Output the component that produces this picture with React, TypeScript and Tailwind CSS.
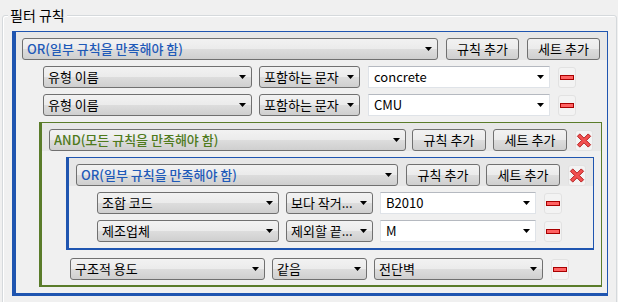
import type { ReactNode } from "react";

const Arrow = () => (
  <svg width="7" height="4" viewBox="0 0 7 4" className="shrink-0">
    <path d="M0 0h7L3.5 4z" fill="#000" />
  </svg>
);

function Combo({ w, children, tone = "text-black" }: { w: string; children: ReactNode; tone?: string }) {
  return (
    <div className={`${w} h-[22px] shrink-0 flex items-center justify-between pl-[4px] pr-[5px] rounded-[3px] border border-[#707070] bg-[linear-gradient(#f2f2f2_0%,#ebebeb_50%,#dddddd_50%,#cfcfcf_100%)] ${tone}`}>
      <span className="truncate whitespace-nowrap">{children}</span>
      <Arrow />
    </div>
  );
}

function Field({ w, children }: { w: string; children: ReactNode }) {
  return (
    <div className={`${w} h-[22px] shrink-0 flex items-center justify-between pl-[5px] pr-[5px] border border-[#dfe3e8] border-t-[#b5b9c0] bg-white`}>
      <span className="whitespace-nowrap">{children}</span>
      <Arrow />
    </div>
  );
}

function Btn({ w, children }: { w: string; children: ReactNode }) {
  return (
    <div className={`${w} h-[22px] shrink-0 flex items-center justify-center rounded-[3px] border border-[#707070] bg-[linear-gradient(#f2f2f2_0%,#ebebeb_50%,#dddddd_50%,#cfcfcf_100%)]`}>
      {children}
    </div>
  );
}

const Minus = () => (
  <div className="w-[18px] h-[21px] shrink-0 flex items-center justify-center rounded-[3px] border border-[#e2e2e2] bg-[#f3f3f3]">
    <div className="w-[14px] h-[5px] border border-[#a80000] bg-[#ff6262]" />
  </div>
);

const Remove = () => (
  <div className="w-[18px] h-[21px] shrink-0 flex items-center justify-center rounded-[3px] border border-[#e2e2e2] bg-[#f3f3f3]">
    <svg width="17" height="17" viewBox="0 0 17 17">
      <path
        d="M1.5 4 L4 1.5 L8.5 6 L13 1.5 L15.5 4 L11 8.5 L15.5 13 L13 15.5 L8.5 11 L4 15.5 L1.5 13 L6 8.5 Z"
        fill="#f25050"
        stroke="#b01818"
        strokeWidth="1"
        strokeLinejoin="round"
      />
    </svg>
  </div>
);

export default function App() {
  return (
    <div className="w-[618px] h-[302px] overflow-hidden bg-[#f0f0f0] text-[13px] text-black font-['Noto_Sans_CJK_KR','Noto_Sans',sans-serif]">
      <div className="relative mt-[15px] ml-[2px] w-[615px] h-[300px] rounded-[3px] border border-[#d5d9dc] shadow-[inset_1px_1px_0_#ffffff]">
        <div className="absolute -top-[10px] left-[5px] px-[2px] bg-[#f0f0f0] text-[14px] leading-[18px]">필터 규칙</div>

        {/* OR outer */}
        <div className="mt-[15px] ml-[9px] w-[596px] border-l-4 border-t border-r border-b-[3px] border-[#1f55b0] pb-[6px]">
          <div className="h-[28px] pt-[6px] pl-[6px] flex gap-[8px] bg-[#e7e7e7]">
            <Combo w="w-[416px]" tone="text-[#1f5ab8] font-medium">OR(일부 규칙을 만족해야 함)</Combo>
            <Btn w="w-[73px]">규칙 추가</Btn>
            <Btn w="w-[73px]">세트 추가</Btn>
          </div>

          <div className="mt-[6px] pl-[27px] flex flex-col gap-[6px]">
            <div className="flex items-center">
              <Combo w="w-[209px]">유형 이름</Combo>
              <div className="ml-[7px]"><Combo w="w-[101px]">포함하는 문자</Combo></div>
              <div className="ml-[8px]"><Field w="w-[182px]">concrete</Field></div>
              <div className="ml-[8px]"><Minus /></div>
            </div>
            <div className="flex items-center">
              <Combo w="w-[209px]">유형 이름</Combo>
              <div className="ml-[7px]"><Combo w="w-[101px]">포함하는 문자</Combo></div>
              <div className="ml-[8px]"><Field w="w-[182px]">CMU</Field></div>
              <div className="ml-[8px]"><Minus /></div>
            </div>
          </div>

          {/* AND group */}
          <div className="mt-[6px] ml-[23px] w-[563px] border-l-[3px] border-t border-r border-b-2 border-[#5a7c2a] pb-[5px]">
            <div className="h-[28px] pt-[6px] pl-[7px] flex items-center bg-[#e7e7e7]">
              <div className="self-end"><Combo w="w-[357px]" tone="text-[#4f7a1c] font-medium">AND(모든 규칙을 만족해야 함)</Combo></div>
              <div className="self-end ml-[6px]"><Btn w="w-[74px]">규칙 추가</Btn></div>
              <div className="self-end ml-[7px]"><Btn w="w-[74px]">세트 추가</Btn></div>
              <div className="self-end ml-[8px]"><Remove /></div>
            </div>

            {/* nested OR */}
            <div className="mt-[6px] ml-[24px] w-[528px] border-l-[3px] border-t border-r border-b-2 border-[#1f55b0] pb-[6px]">
              <div className="h-[28px] pt-[6px] pl-[7px] flex items-center bg-[#e7e7e7]">
                <div className="self-end"><Combo w="w-[322px]" tone="text-[#1f5ab8] font-medium">OR(일부 규칙을 만족해야 함)</Combo></div>
                <div className="self-end ml-[8px]"><Btn w="w-[74px]">규칙 추가</Btn></div>
                <div className="self-end ml-[6px]"><Btn w="w-[74px]">세트 추가</Btn></div>
                <div className="self-end ml-[8px]"><Remove /></div>
              </div>
              <div className="mt-[6px] pl-[28px] flex flex-col gap-[6px]">
                <div className="flex items-center">
                  <Combo w="w-[182px]">조합 코드</Combo>
                  <div className="ml-[7px]"><Combo w="w-[87px]">보다 작거...</Combo></div>
                  <div className="ml-[7px]"><Field w="w-[156px]">B2010</Field></div>
                  <div className="ml-[8px]"><Minus /></div>
                </div>
                <div className="flex items-center">
                  <Combo w="w-[182px]">제조업체</Combo>
                  <div className="ml-[7px]"><Combo w="w-[87px]">제외할 끝...</Combo></div>
                  <div className="ml-[7px]"><Field w="w-[156px]">M</Field></div>
                  <div className="ml-[8px]"><Minus /></div>
                </div>
              </div>
            </div>

            <div className="mt-[8px] pl-[28px] flex items-center">
              <Combo w="w-[195px]">구조적 용도</Combo>
              <div className="ml-[7px]"><Combo w="w-[95px]">같음</Combo></div>
              <div className="ml-[7px]"><Combo w="w-[169px]">전단벽</Combo></div>
              <div className="ml-[8px]"><Minus /></div>
            </div>
          </div>
        </div>
      </div>
    </div>
  );
}
